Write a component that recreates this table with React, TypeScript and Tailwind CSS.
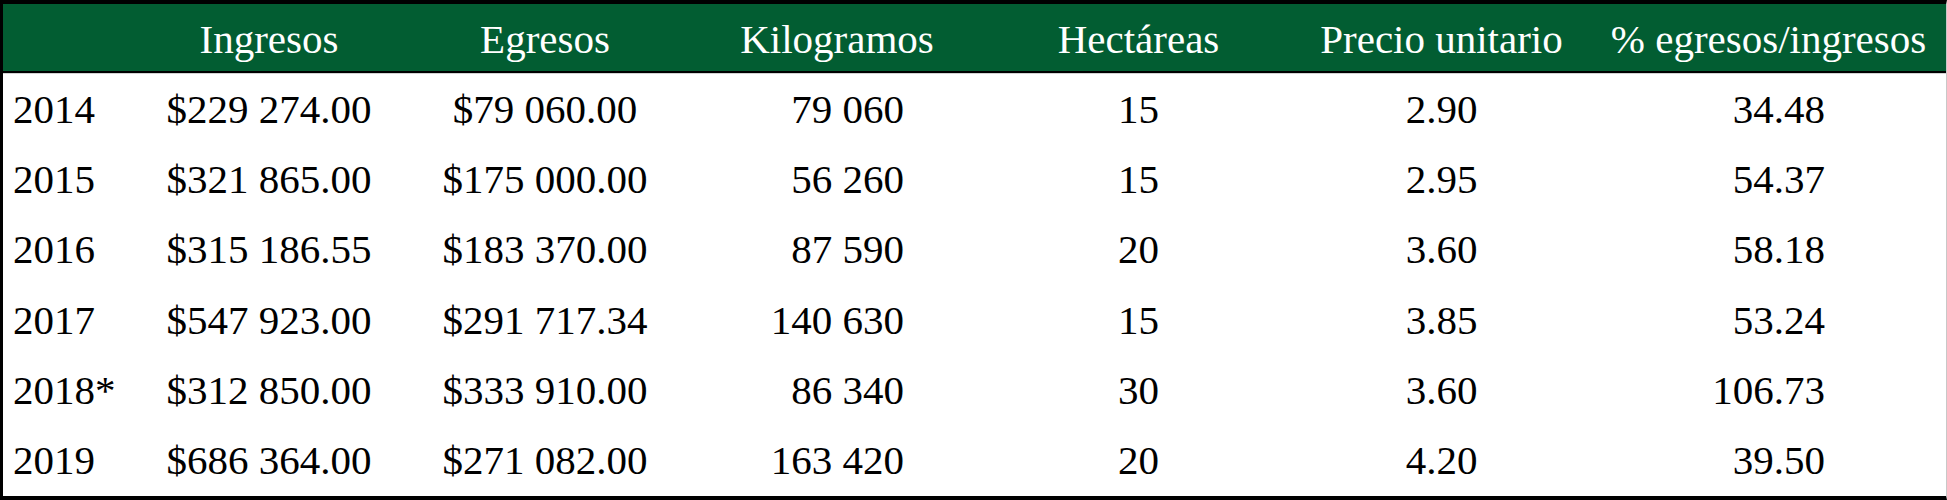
const headers = [
  { label: "", align: "text-left" },
  { label: "Ingresos", align: "text-center" },
  { label: "Egresos", align: "text-center" },
  { label: "Kilogramos", align: "text-center" },
  { label: "Hectáreas", align: "text-center" },
  { label: "Precio unitario", align: "text-center" },
  { label: "% egresos/ingresos", align: "text-center" },
]

const rows = [
  ["2014", "$229 274.00", "$79 060.00", "79 060", "15", "2.90", "34.48"],
  ["2015", "$321 865.00", "$175 000.00", "56 260", "15", "2.95", "54.37"],
  ["2016", "$315 186.55", "$183 370.00", "87 590", "20", "3.60", "58.18"],
  ["2017", "$547 923.00", "$291 717.34", "140 630", "15", "3.85", "53.24"],
  ["2018*", "$312 850.00", "$333 910.00", "86 340", "30", "3.60", "106.73"],
  ["2019", "$686 364.00", "$271 082.00", "163 420", "20", "4.20", "39.50"],
]

// per-column alignment of the body cells
const cellClass = [
  "justify-start pl-[10px]",
  "justify-center",
  "justify-center",
  "justify-end pr-[83px]",
  "justify-center",
  "justify-center",
  "justify-end pr-[119px]",
]

const cols = "grid grid-cols-[132px_268px_284px_300px_303px_303px_351px]"

export default function App() {
  return (
    <div className="w-[1947px] h-[500px] bg-white font-['Liberation_Serif',serif] text-[41px] leading-none">
      <div className="w-[1947px] border-t-4 border-l-[3px] border-b-4 border-r border-t-black border-l-black border-b-black border-r-[#c8c8c8]">
        <div className={`${cols} h-[67px] bg-[#025d32] text-white`}>
          {headers.map((h, i) => (
            <div key={i} className="flex items-center justify-center pt-[3px]">
              {h.label}
            </div>
          ))}
        </div>
        <div className="h-[2px] bg-black" />
        <div className="h-px bg-[#d4d4d4]" />
        {rows.map((r) => (
          <div key={r[0]} className={`${cols} h-[70.33px] text-black`}>
            {r.map((v, i) => (
              <div key={i} className={`flex items-center ${cellClass[i]}`}>
                {v}
              </div>
            ))}
          </div>
        ))}
      </div>
    </div>
  )
}
